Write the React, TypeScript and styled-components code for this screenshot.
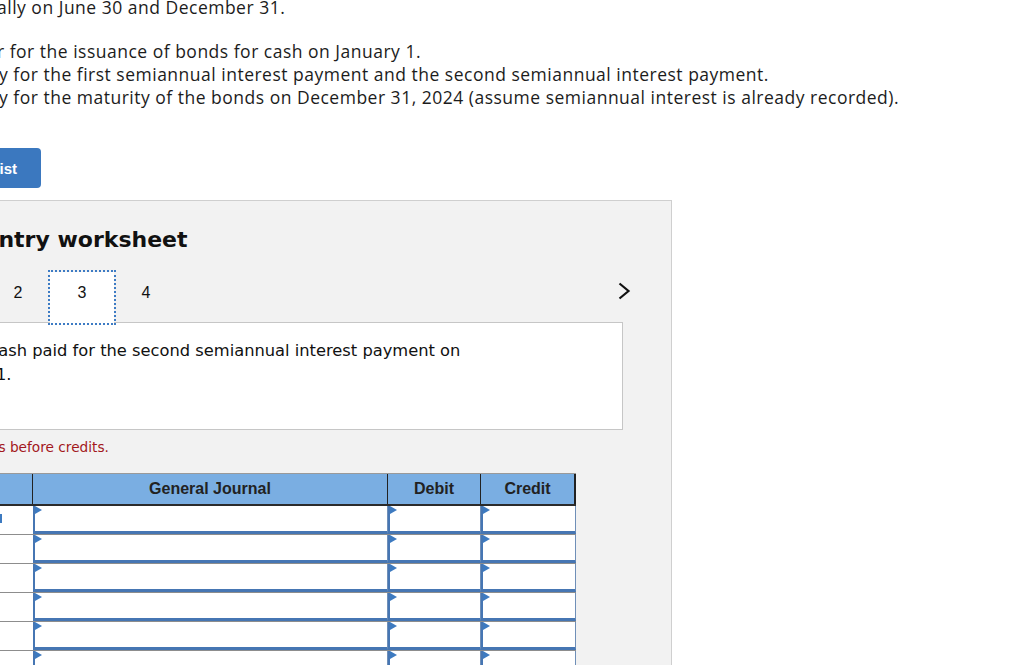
import React from 'react';
import styled, { createGlobalStyle } from 'styled-components';

const GlobalStyle = createGlobalStyle`
    html, body {
        margin: 0;
        padding: 0;
        background: #fff;
        overflow: hidden;
    }
    * { box-sizing: border-box; }
`

const rows = [0, 1, 2, 3, 4, 5];

function App() {
    return (
        <>
            <GlobalStyle/>
            <Page>
                <Intro>
                    <IntroLine $indent={-3}>ally on June 30 and December 31.</IntroLine>
                    <TaskList>
                        <IntroLine $indent={-3}>r for the issuance of bonds for cash on January 1.</IntroLine>
                        <IntroLine $indent={-1}>y for the first semiannual interest payment and the second semiannual interest payment.</IntroLine>
                        <IntroLine $indent={-1}>y for the maturity of the bonds on December 31, 2024 (assume semiannual interest is already recorded).</IntroLine>
                    </TaskList>
                </Intro>

                <ListButton>View transaction list</ListButton>

                <Panel>
                    <Heading>Journal entry worksheet</Heading>
                    <TabRow>
                        <Tab>1</Tab>
                        <Tab>2</Tab>
                        <Tab $active>3</Tab>
                        <Tab>4</Tab>
                        <NextArrow viewBox="0 0 14 18" width={14} height={18}>
                            <path d="M2.5 1.5 L11.5 9 L2.5 16.5" fill="none" stroke="#111" strokeWidth={2.2}/>
                        </NextArrow>
                    </TabRow>
                    <Prompt>
                        <PromptText>
                            Record the cash paid for the second semiannual interest payment on December 31.
                        </PromptText>
                    </Prompt>
                    <Note>Note: Enter debits before credits.</Note>

                    <Journal>
                        <HeadRow>
                            <HeadCell>Event</HeadCell>
                            <HeadCell>General Journal</HeadCell>
                            <HeadCell>Debit</HeadCell>
                            <HeadCell $last>Credit</HeadCell>
                        </HeadRow>
                        {rows.map((r) => (
                            <BodyRow key={r}>
                                <EventCell>{r === 0 ? <EventMark/> : null}</EventCell>
                                <InputCell><Flag/></InputCell>
                                <InputCell><Flag/></InputCell>
                                <InputCell><Flag/></InputCell>
                            </BodyRow>
                        ))}
                    </Journal>
                </Panel>
            </Page>
        </>
    );
}

const Page = styled.div`
    width: 1024px;
    height: 665px;
    overflow: hidden;
`
const Intro = styled.div`
    margin-top: -4px;
    font-family: "Open Sans", Lato, sans-serif;
    font-size: 17.5px;
    letter-spacing: 0.5px;
    line-height: 23px;
    color: #1c1c1c;
`
const IntroLine = styled.div<{ $indent: number }>`
    white-space: nowrap;
    margin-left: ${p => p.$indent}px;
`
const TaskList = styled.div`
    margin-top: 21px;
`
const ListButton = styled.button`
    display: flex;
    justify-content: flex-end;
    align-items: center;
    margin: 39px 0 0 -158px;
    width: 199px;
    height: 40px;
    padding: 0 24px 0 0;
    border: none;
    border-radius: 4px;
    background-color: #3b78bf;
    color: #fff;
    font-family: "Liberation Sans", Arial, sans-serif;
    font-weight: 700;
    font-size: 15px;
    white-space: nowrap;
`
const Panel = styled.section`
    margin: 12px 0 0 -41px;
    width: 713px;
    height: 600px;
    padding: 26px 48px 0 40px;
    background-color: #f2f2f2;
    border: 1px solid #cfcfcf;
    font-family: "DejaVu Sans", Verdana, sans-serif;
    color: #111;
`
const Heading = styled.h2`
    margin: 0 0 0 -112px;
    font-size: 22px;
    line-height: 26px;
    font-weight: 700;
    white-space: nowrap;
`
const TabRow = styled.div`
    display: flex;
    align-items: flex-start;
    margin: 19px 0 -1px -78px;
    height: 51px;
    font-family: "Liberation Sans", Arial, sans-serif;
    font-size: 16px;
`
const Tab = styled.div<{ $active?: boolean }>`
    position: relative;
    z-index: 1;
    width: 64px;
    height: 51px;
    padding-top: 12px;
    line-height: 18px;
    text-align: center;
    background-color: ${p => p.$active ? '#fff' : 'transparent'};
    outline: ${p => p.$active ? '2px dotted #3d7bc4' : 'none'};
`
const NextArrow = styled.svg`
    margin: 10px -8px 0 auto;
`
const Prompt = styled.div`
    margin-left: -20px;
    height: 108px;
    padding: 16px 20px 0 20px;
    background-color: #fff;
    border: 1px solid #c6c6c6;
    border-left: none;
    overflow: hidden;
`
const PromptText = styled.p`
    margin: 0 0 0 -104px;
    width: 610px;
    font-size: 16.3px;
    line-height: 24px;
`
const Note = styled.p`
    margin: 8px 0 0 -119px;
    font-size: 13.7px;
    line-height: 18px;
    color: #a3181d;
    white-space: nowrap;
`
const Journal = styled.div`
    margin: 17px 0 0 -77px;
    width: 653px;
    font-family: "Liberation Sans", Arial, sans-serif;
`
const HeadRow = styled.div`
    display: grid;
    grid-template-columns: 110px 355px 93px 95px;
    height: 33px;
    background-color: #7aaee2;
    border-top: 1px solid #9a9a9a;
    border-bottom: 2px solid #2b2b2b;
`
const HeadCell = styled.div<{ $last?: boolean }>`
    display: flex;
    align-items: center;
    justify-content: center;
    font-size: 16px;
    font-weight: 700;
    color: #222;
    border-right: ${p => p.$last ? '2px' : '1px'} solid #222;
`
const BodyRow = styled.div`
    display: grid;
    grid-template-columns: 110px 355px 93px 95px;
    height: 29px;
    border-bottom: 1px solid #8d8d8d;
`
const EventCell = styled.div`
    position: relative;
    background-color: #fff;
`
const EventMark = styled.span`
    position: absolute;
    right: 31px;
    top: 8px;
    width: 2px;
    height: 9px;
    background-color: #3d7ac0;
`
const InputCell = styled.div`
    position: relative;
    background-color: #fff;
    border-left: 2px solid #4676b3;
    border-right: 1px solid #6f8fb8;
    border-bottom: 3px solid #4676b3;
`
const Flag = styled.span`
    position: absolute;
    left: 0;
    top: 0;
    width: 0;
    height: 0;
    border-top: 4px solid transparent;
    border-bottom: 4px solid transparent;
    border-left: 7px solid #3d7ac0;
`

export default App;
